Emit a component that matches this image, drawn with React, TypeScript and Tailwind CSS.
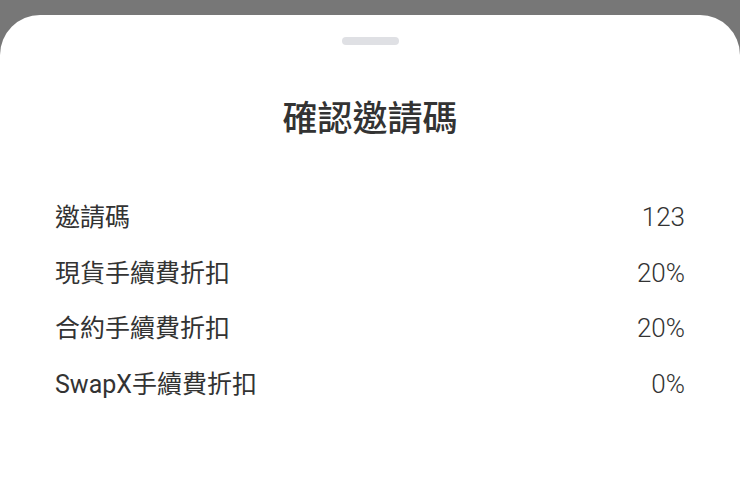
const rows = [
  { label: '邀請碼', value: '123' },
  { label: '現貨手續費折扣', value: '20%' },
  { label: '合約手續費折扣', value: '20%' },
  { label: 'SwapX手續費折扣', value: '0%' },
];

export default function App() {
  return (
    <div
      className="h-[479px] w-[740px] overflow-hidden bg-[#777777] pt-[15px]"
      style={{ fontFamily: 'Roboto, "Noto Sans CJK TC", sans-serif' }}
    >
      <div className="h-full rounded-t-[40px] bg-white pt-[22px]">
        <div className="mx-auto h-2 w-[57px] rounded-full bg-[#dfe0e4]" />
        <h1 className="mt-[55px] text-center text-[35px] font-medium leading-[40px] text-[#333333]">
          確認邀請碼
        </h1>
        <div className="mt-[50px] flex flex-col px-[55px]">
          {rows.map((row) => (
            <div key={row.label} className="flex h-[55.5px] items-center justify-between text-[25px] text-[#333333]">
              <span>{row.label}</span>
              <span className="text-[26px] font-light">{row.value}</span>
            </div>
          ))}
        </div>
      </div>
    </div>
  );
}
